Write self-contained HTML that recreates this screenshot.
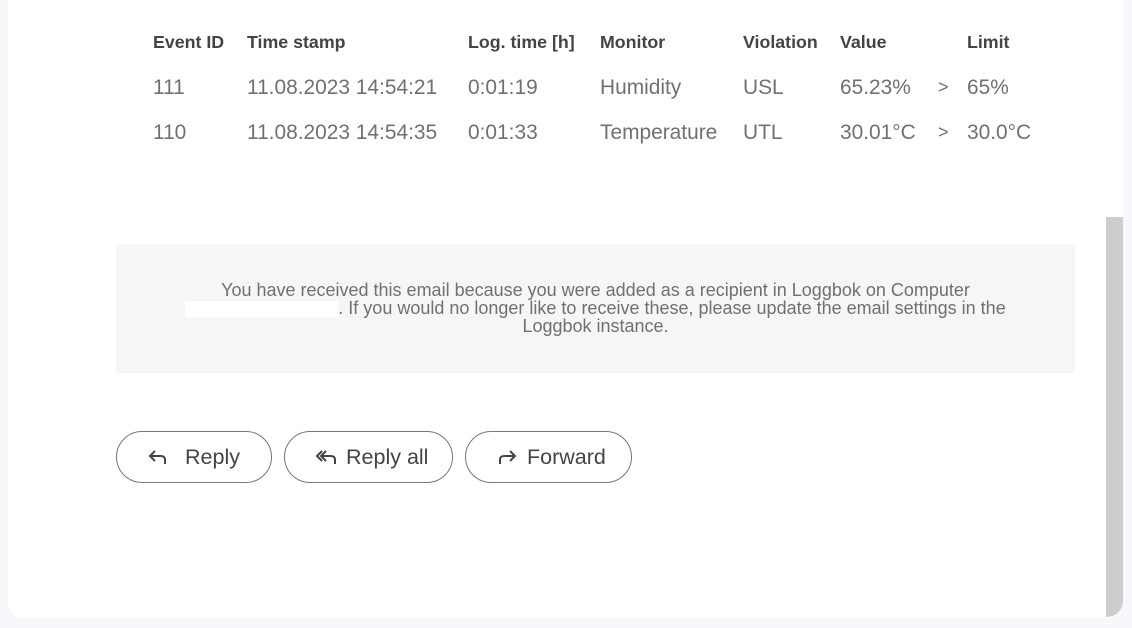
<!DOCTYPE html>
<html><head><style>
body{margin:0;width:1132px;height:628px;background:#f6f8fc;position:relative;overflow:hidden;font-family:"Liberation Sans",Arial,sans-serif}
.card{position:absolute;left:8px;top:-20px;width:1115px;height:638px;background:#fff;border-radius:0 0 16px 16px}
.sb{position:absolute;left:1106px;top:217px;width:17px;height:400px;background:#cdcdcd;border-radius:0 0 16px 0}
.t{position:absolute;white-space:nowrap}
.h{font-weight:bold;font-size:17.8px;color:#444;top:32px}
.r{font-size:20.9px;color:#707070}
.foot{position:absolute;left:116px;top:244px;width:959px;height:129px;background:#f6f6f6}
.fl{position:absolute;left:0;width:959px;text-align:center;font-size:18px;color:#707070;line-height:18px}
.btn{position:absolute;top:431px;height:50px;border:1px solid #747775;border-radius:26px;font-size:21.5px;color:#444;box-sizing:content-box}
.btn svg{position:absolute;left:30px;top:15px}
.btn span{position:absolute;top:13px}
</style></head><body>
<div class="card"></div>
<div class="sb"></div>
<div class="t h" style="left:153px">Event ID</div>
<div class="t h" style="left:247px">Time stamp</div>
<div class="t h" style="left:468px">Log. time [h]</div>
<div class="t h" style="left:600px">Monitor</div>
<div class="t h" style="left:743px">Violation</div>
<div class="t h" style="left:840px">Value</div>
<div class="t h" style="left:967px">Limit</div>

<div class="t r" style="left:153px;top:76px">111</div>
<div class="t r" style="left:247px;top:76px">11.08.2023 14:54:21</div>
<div class="t r" style="left:468px;top:76px">0:01:19</div>
<div class="t r" style="left:600px;top:76px">Humidity</div>
<div class="t r" style="left:743px;top:76px">USL</div>
<div class="t r" style="left:840px;top:76px">65.23%</div>
<div class="t r" style="left:938px;top:77px;font-size:18px">&gt;</div>
<div class="t r" style="left:967px;top:76px">65%</div>

<div class="t r" style="left:153px;top:121px">110</div>
<div class="t r" style="left:247px;top:121px">11.08.2023 14:54:35</div>
<div class="t r" style="left:468px;top:121px">0:01:33</div>
<div class="t r" style="left:600px;top:121px">Temperature</div>
<div class="t r" style="left:743px;top:121px">UTL</div>
<div class="t r" style="left:840px;top:121px">30.01°C</div>
<div class="t r" style="left:938px;top:122px;font-size:18px">&gt;</div>
<div class="t r" style="left:967px;top:121px">30.0°C</div>

<div class="foot">
<div class="fl" style="top:37px">You have received this email because you were added as a recipient in Loggbok on Computer</div>
<div class="fl" style="top:55px"><span style="display:inline-block;width:153px;height:16px;background:#fff;vertical-align:-3px"></span>. If you would no longer like to receive these, please update the email settings in the</div>
<div class="fl" style="top:73px">Loggbok instance.</div>
</div>

<div class="btn" style="left:116px;width:154px">
<svg width="22" height="22" viewBox="0 0 22 22"><path d="M8 4 L3 9 L8 14 M3 9 H14 Q18 9 18 13 V17" fill="none" stroke="#444" stroke-width="2"/></svg>
<span style="left:68px">Reply</span></div>
<div class="btn" style="left:284px;width:167px">
<svg width="24" height="22" viewBox="0 0 24 22"><path d="M7 4 L2 9 L7 14 M11 4 L6 9 L11 14 M6 9 H16 Q20 9 20 13 V17" fill="none" stroke="#444" stroke-width="2"/></svg>
<span style="left:61px">Reply all</span></div>
<div class="btn" style="left:465px;width:165px">
<svg width="22" height="22" viewBox="0 0 22 22"><path d="M14 4 L19 9 L14 14 M19 9 H8 Q4 9 4 13 V17" fill="none" stroke="#444" stroke-width="2"/></svg>
<span style="left:61px">Forward</span></div>
</body></html>
